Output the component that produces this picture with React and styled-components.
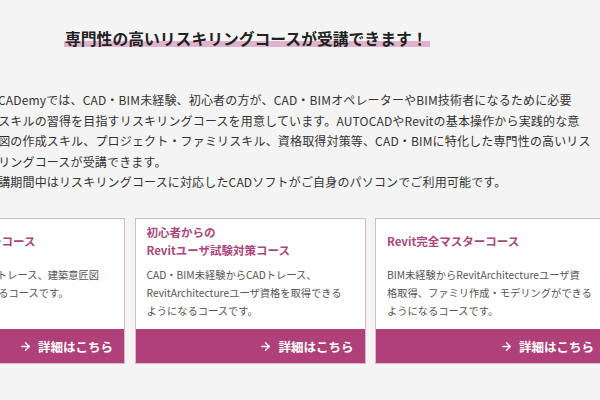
import styled, { createGlobalStyle } from "styled-components";
import { ArrowRight } from "lucide-react";

const GlobalStyle = createGlobalStyle`
  html, body {
    margin: 0;
    padding: 0;
    background: #f4f4f4;
    overflow: hidden;
  }
  body {
    width: 600px;
    height: 400px;
    font-family: "Noto Sans CJK JP", "Noto Sans", sans-serif;
  }
`;

const courses = [
  {
    title: ["AutoCADマスターコース"],
    text: ["CAD未経験からCADトレース、建築意匠図", "面を描けるようになるコースです。"],
  },
  {
    title: ["初心者からの", "Revitユーザ試験対策コース"],
    text: [
      "CAD・BIM未経験からCADトレース、",
      "RevitArchitectureユーザ資格を取得できる",
      "ようになるコースです。",
    ],
  },
  {
    title: ["Revit完全マスターコース"],
    text: [
      "BIM未経験からRevitArchitectureユーザ資",
      "格取得、ファミリ作成・モデリングができる",
      "ようになるコースです。",
    ],
  },
];

const intro = [
  "CADemyでは、CAD・BIM未経験、初心者の方が、CAD・BIMオペレーターやBIM技術者になるために必要",
  "なスキルの習得を目指すリスキリングコースを用意しています。AUTOCADやRevitの基本操作から実践的な意",
  "匠図の作成スキル、プロジェクト・ファミリスキル、資格取得対策等、CAD・BIMに特化した専門性の高いリス",
  "キリングコースが受講できます。",
  "受講期間中はリスキリングコースに対応したCADソフトがご自身のパソコンでご利用可能です。",
];

const withBreaks = (lines) =>
  lines.map((line, i) => (
    <span key={i}>
      {line}
      {i < lines.length - 1 && <br />}
    </span>
  ));

const App = () => {
  return (
    <>
      <GlobalStyle />
      <Section>
        <Heading>
          <Marker>専門性の高いリスキリングコースが受講できます！</Marker>
        </Heading>
        <Lead>{withBreaks(intro)}</Lead>
        <CardGrid>
          {courses.map((course, i) => (
            <Card key={i}>
              <CardTitle>
                <span>{withBreaks(course.title)}</span>
              </CardTitle>
              <CardText>{withBreaks(course.text)}</CardText>
              <CardLink href="#">
                <ArrowRight size={13} strokeWidth={2.4} />
                詳細はこちら
              </CardLink>
            </Card>
          ))}
        </CardGrid>
      </Section>
    </>
  );
};

export default App;

const Section = styled.section`
  width: 710px;
  margin-left: -106px;
  padding-top: 29px;
`;

const Heading = styled.h2`
  margin: 0 0 0 170px;
  font-size: 15.8px;
  font-weight: 700;
  line-height: 20px;
  color: #222;
`;

const Marker = styled.span`
  display: inline-block;
  padding: 0 2px 0 1px;
  background: linear-gradient(
    transparent 58%,
    #dfb3cb 58%,
    #dfb3cb 90%,
    transparent 90%
  );
`;

const Lead = styled.p`
  margin: 41px 0 0 92px;
  font-size: 12px;
  letter-spacing: 0.16px;
  line-height: 20.5px;
  color: #333;
  text-indent: 1em;
  white-space: nowrap;
`;

const CardGrid = styled.div`
  display: grid;
  grid-template-columns: repeat(3, 231px);
  column-gap: 9.5px;
  margin-top: 25.5px;
`;

const Card = styled.div`
  display: flex;
  flex-direction: column;
  background: #fff;
  border: 1px solid #ddb6ca;
`;

const CardTitle = styled.h3`
  display: flex;
  align-items: center;
  height: 36px;
  margin: 0;
  padding: 4px 11px 0;
  font-size: 11.5px;
  font-weight: 700;
  line-height: 18px;
  color: #a9477c;
`;

const CardText = styled.p`
  margin: 7px 0 0;
  padding: 0 11px 9px;
  font-size: 10.25px;
  line-height: 18px;
  color: #555;
  white-space: nowrap;
`;

const CardLink = styled.a`
  display: flex;
  align-items: center;
  justify-content: flex-end;
  gap: 6px;
  height: 34px;
  margin-top: auto;
  padding: 0 11px;
  background: #b04079;
  color: #fff;
  font-size: 12.5px;
  font-weight: 700;
  text-decoration: none;
`;
